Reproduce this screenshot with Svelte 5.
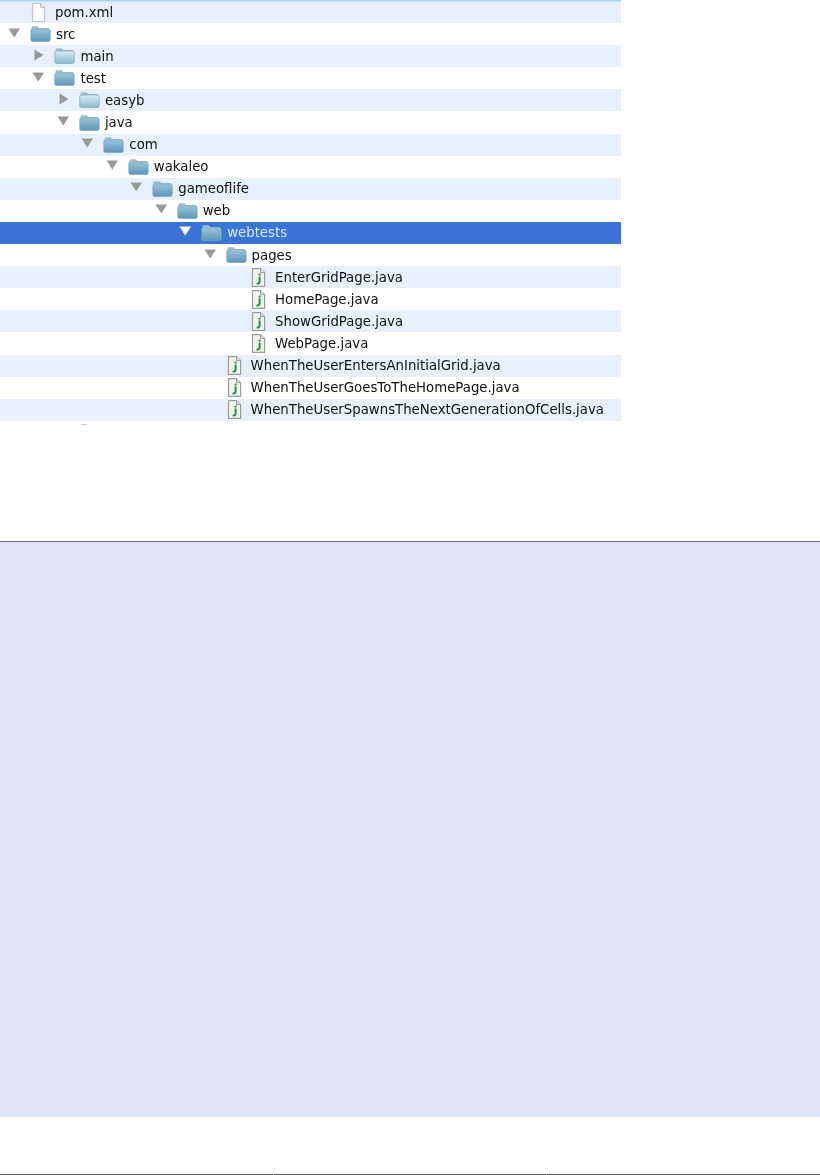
<script>
  const rows = [
    { name: 'pom.xml', depth: 0, kind: 'doc' },
    { name: 'src', depth: 0, kind: 'folder', open: true },
    { name: 'main', depth: 1, kind: 'folder', open: false },
    { name: 'test', depth: 1, kind: 'folder', open: true },
    { name: 'easyb', depth: 2, kind: 'folder', open: false },
    { name: 'java', depth: 2, kind: 'folder', open: true },
    { name: 'com', depth: 3, kind: 'folder', open: true },
    { name: 'wakaleo', depth: 4, kind: 'folder', open: true },
    { name: 'gameoflife', depth: 5, kind: 'folder', open: true },
    { name: 'web', depth: 6, kind: 'folder', open: true },
    { name: 'webtests', depth: 7, kind: 'folder', open: true, selected: true },
    { name: 'pages', depth: 8, kind: 'folder', open: true },
    { name: 'EnterGridPage.java', depth: 9, kind: 'java' },
    { name: 'HomePage.java', depth: 9, kind: 'java' },
    { name: 'ShowGridPage.java', depth: 9, kind: 'java' },
    { name: 'WebPage.java', depth: 9, kind: 'java' },
    { name: 'WhenTheUserEntersAnInitialGrid.java', depth: 8, kind: 'java' },
    { name: 'WhenTheUserGoesToTheHomePage.java', depth: 8, kind: 'java' },
    { name: 'WhenTheUserSpawnsTheNextGenerationOfCells.java', depth: 8, kind: 'java' },
    { name: '', depth: 2, kind: 'folder', hideTwisty: true }
  ];
</script>

<div class="page">
  <div class="tree">
    <div class="edge"></div>
    {#each rows as row, i}
      <div class="row" class:alt={i % 2 === 0} class:selected={row.selected} style="padding-left: {row.depth * 24.45 + 8}px">
        <span class="twisty">
          {#if row.kind === 'folder' && !row.hideTwisty}
            <svg width="14" height="12" viewBox="0 0 14 12">
              {#if row.open}
                <path d="M0.5 1.5H12L6.25 10.5Z" fill={row.selected ? '#fff' : '#999'} />
              {:else}
                <path d="M2.5 0.5L11.5 6L2.5 11.5Z" fill="#999" />
              {/if}
            </svg>
          {/if}
        </span>
        {#if row.kind === 'folder'}
          <svg class="icon" width="21" height="17" viewBox="0 0 21 17">
            <defs>
              <linearGradient id="fold{i}" x1="0" y1="0" x2="0" y2="1">
                <stop offset="0" stop-color={row.open ? '#9cc3d9' : '#dcebf3'} />
                <stop offset="1" stop-color={row.open ? '#5e97b8' : '#8dbad2'} />
              </linearGradient>
            </defs>
            <path d="M1.5 5V2.6Q1.5 1.2 3 1.2H7Q8.3 1.2 8.8 2.4L9.2 3H18Q19.5 3 19.5 4.4V5Z" fill="#9fbfd1" />
            <rect x="0.8" y="4" width="19.4" height="12.4" rx="1.6" fill="url(#fold{i})" stroke="#7ba6bf" stroke-width="0.7" />
          </svg>
        {:else if row.kind === 'doc'}
          <svg class="icon file" width="15" height="19" viewBox="0 0 15 19">
            <path d="M1.5 0.5H9.5L13.5 4.5V18.5H1.5Z" fill="#fff" stroke="#c4c4c4" stroke-width="1.2" />
            <path d="M9.5 0.5V4.5H13.5" fill="#eee" stroke="#c4c4c4" />
          </svg>
        {:else}
          <svg class="icon file" width="15" height="19" viewBox="0 0 15 19">
            <path d="M1.5 0.6H9.5L13.6 4.6V18.4H1.5Z" fill="#f3f3ef" stroke="#9c9c9c" stroke-width="1.2" />
            <path d="M9.5 0.6V4.6H13.6" fill="#e2e2e2" stroke="#9c9c9c" />
            <path d="M8.6 8.6V13.6Q8.6 15.4 6.8 15.4H5.6" fill="none" stroke="#1f9440" stroke-width="2" />
            <rect x="7.6" y="5.6" width="2" height="2" fill="#1f9440" />
          </svg>
        {/if}
        <span class="label">{row.name}</span>
      </div>
    {/each}
  </div>

  <div class="panel"></div>

  <div class="foot">
    <span></span><span></span><span></span>
  </div>
</div>

<style>
  :global(body) {
    margin: 0;
    background: #fff;
  }
  .page {
    width: 820px;
    height: 1175px;
    display: flex;
    flex-direction: column;
    background: #fff;
    overflow: hidden;
  }
  .tree {
    width: 621px;
    height: 425px;
    overflow: hidden;
    flex: none;
    font-family: "DejaVu Sans", sans-serif;
    font-size: 13.3px;
    color: #111;
    filter: blur(0.35px);
  }
  .edge {
    height: 1px;
    background: #a9d4ef;
    position: relative;
    box-shadow: 0 1px 1px #c5e1f5;
  }
  .row {
    height: 22.1px;
    box-sizing: border-box;
    display: flex;
    align-items: center;
    white-space: nowrap;
  }
  .alt {
    background: #e9f0fd;
  }
  .selected {
    background: #3b74d7;
    color: #d8e6fa;
  }
  .twisty {
    width: 22px;
    flex: none;
    display: flex;
    align-items: center;
    margin-top: -3px;
  }
  .icon {
    flex: none;
    margin-right: 5px;
    margin-top: -1px;
  }
  .file {
    margin-left: 1px;
    margin-right: 9px;
    margin-top: 0;
  }
  .label {
    margin-top: 0;
  }
  .panel {
    margin-top: 116px;
    height: 575px;
    flex: none;
    background: #e2e4f9;
    border-top: 1px solid #6e6a8e;
  }
  .foot {
    margin-top: auto;
    display: grid;
    grid-template-columns: 1fr 1fr 1fr;
    gap: 1px;
  }
  .foot span {
    height: 1px;
    background: #555;
  }
</style>
